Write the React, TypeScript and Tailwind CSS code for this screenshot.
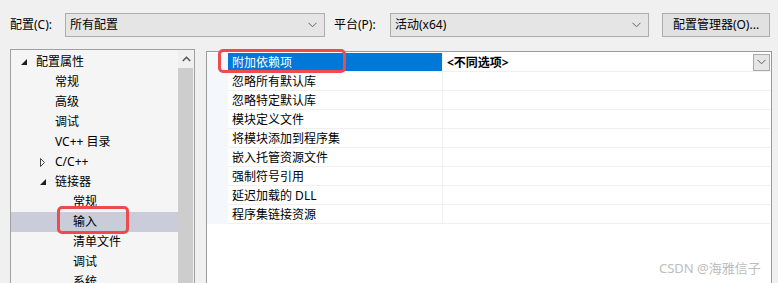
import React from "react";

const Chevron = ({ className = "" }: { className?: string }) => (
  <svg width="9" height="6" viewBox="0 0 9 6" className={className}>
    <path d="M0.5 0.8 L4.5 4.8 L8.5 0.8" fill="none" stroke="#606060" strokeWidth="1" />
  </svg>
);

const Combo = ({ w, text }: { w: string; text: string }) => (
  <div className={`${w} h-[24px] border border-[#adadad] bg-[#e5e5e5] flex items-center pl-[4px] pr-[7px]`}>
    <span className="flex-1 leading-[16px]">{text}</span>
    <Chevron />
  </div>
);

const Expanded = () => (
  <svg width="6" height="6" viewBox="0 0 6 6">
    <path d="M6 0 L6 6 L0 6 Z" fill="#1e1e1e" />
  </svg>
);

const Collapsed = () => (
  <svg width="5" height="9" viewBox="0 0 5 9">
    <path d="M0.5 0.5 L4.5 4.5 L0.5 8.5 Z" fill="none" stroke="#444" strokeWidth="1" />
  </svg>
);

type TreeItem = { text: string; level: number; icon?: "exp" | "col"; selected?: boolean };

const tree: TreeItem[] = [
  { text: "配置属性", level: 0, icon: "exp" },
  { text: "常规", level: 1 },
  { text: "高级", level: 1 },
  { text: "调试", level: 1 },
  { text: "VC++ 目录", level: 1 },
  { text: "C/C++", level: 1, icon: "col" },
  { text: "链接器", level: 1, icon: "exp" },
  { text: "常规", level: 2 },
  { text: "输入", level: 2, selected: true },
  { text: "清单文件", level: 2 },
  { text: "调试", level: 2 },
  { text: "系统", level: 2 },
];

const rows = [
  "附加依赖项",
  "忽略所有默认库",
  "忽略特定默认库",
  "模块定义文件",
  "将模块添加到程序集",
  "嵌入托管资源文件",
  "强制符号引用",
  "延迟加载的 DLL",
  "程序集链接资源",
];

export default function App() {
  return (
    <div
      className="relative w-[778px] h-[283px] overflow-hidden bg-[#f0f0f0] text-[12px] text-black"
      style={{ fontFamily: '"Noto Sans", "Noto Sans CJK SC", sans-serif' }}
    >
      {/* Top bar */}
      <div className="flex items-center h-[24px] mt-[13px]">
        <span className="ml-[10px] w-[55px] leading-[16px]">配置(C):</span>
        <Combo w="w-[260px]" text="所有配置" />
        <span className="ml-[9px] w-[56px] leading-[16px]">平台(P):</span>
        <Combo w="w-[259px]" text="活动(x64)" />
        <div className="ml-[13px] w-[108px] h-[24px] border border-[#adadad] bg-[#e1e1e1] flex items-center justify-center leading-[16px]">
          配置管理器(O)...
        </div>
      </div>

      {/* Main area */}
      <div className="flex mt-[12px]">
        {/* Left tree panel */}
        <div className="ml-[10px] w-[185px] h-[240px] border border-[#a0a0a0] flex">
          <div className="w-[167px] bg-[#f5f5f5] pt-[2px]">
            {tree.map((t, i) => (
              <div
                key={i}
                className={`h-[20px] flex items-center relative ${t.selected ? "bg-[#cbccd9]" : ""}`}
              >
                {t.icon && (
                  <span
                    className={`absolute flex items-center ${
                      t.level === 0 ? "left-[10px]" : "left-[29px]"
                    }`}
                  >
                    {t.icon === "exp" ? <Expanded /> : <Collapsed />}
                  </span>
                )}
                <span
                  className={`leading-[16px] ${
                    t.level === 0 ? "ml-[25px]" : t.level === 1 ? "ml-[44px]" : "ml-[62px]"
                  }`}
                >
                  {t.text}
                </span>
              </div>
            ))}
          </div>
          <div className="w-[16px] bg-[#f0f0f0] flex flex-col">
            <div className="h-[18px] flex items-center justify-center">
              <svg width="9" height="6" viewBox="0 0 9 6">
                <path d="M0.8 5 L4.5 1.3 L8.2 5" fill="none" stroke="#555" strokeWidth="1.6" />
              </svg>
            </div>
            <div className="flex-1 bg-[#cdcdcd] ml-[0px] mr-[1px]" />
          </div>
        </div>

        {/* Right property grid panel */}
        <div className="ml-[11px] mt-[2px] w-[566px] h-[240px] border border-[#9a9a9a] bg-white pt-[1px]">
          {rows.map((r, i) => (
            <div key={i} className="flex h-[19px]">
              <div className="w-[21px] bg-[#f4f7fb]" />
              <div
                className={`w-[214px] pl-[4px] flex items-center border-b border-[#f0f0f0] ${
                  i === 0 ? "bg-[#0078d7] text-white border-[#0078d7]" : ""
                }`}
              >
                <span className="leading-[16px] pt-[1px]">{r}</span>
              </div>
              <div className="w-[1px] bg-[#f0f0f0]" />
              <div className="w-[328px] flex items-center border-b border-[#f0f0f0] pl-[4px]">
                {i === 0 && (
                  <>
                    <span className="flex-1 font-bold leading-[16px] pt-[1px]">&lt;不同选项&gt;</span>
                    <div className="w-[17px] h-[17px] mr-[1px] border border-[#a9a9a9] bg-[#e5e5e5] flex items-center justify-center">
                      <Chevron />
                    </div>
                  </>
                )}
              </div>
            </div>
          ))}
        </div>
      </div>

      {/* Red highlight boxes */}
      <div className="absolute left-[218px] top-[49px] w-[128px] h-[24px] border-[3px] border-[#ef4b4f] rounded-[5px]" />
      <div className="absolute left-[57px] top-[206px] w-[72px] h-[28px] border-[3px] border-[#ef4b4f] rounded-[5px]" />

      {/* Watermark */}
      <div className="absolute left-[659px] top-[259px] text-[13px] leading-[18px] text-[#bdbdbd] whitespace-nowrap">
        CSDN @海雅信子
      </div>
    </div>
  );
}
